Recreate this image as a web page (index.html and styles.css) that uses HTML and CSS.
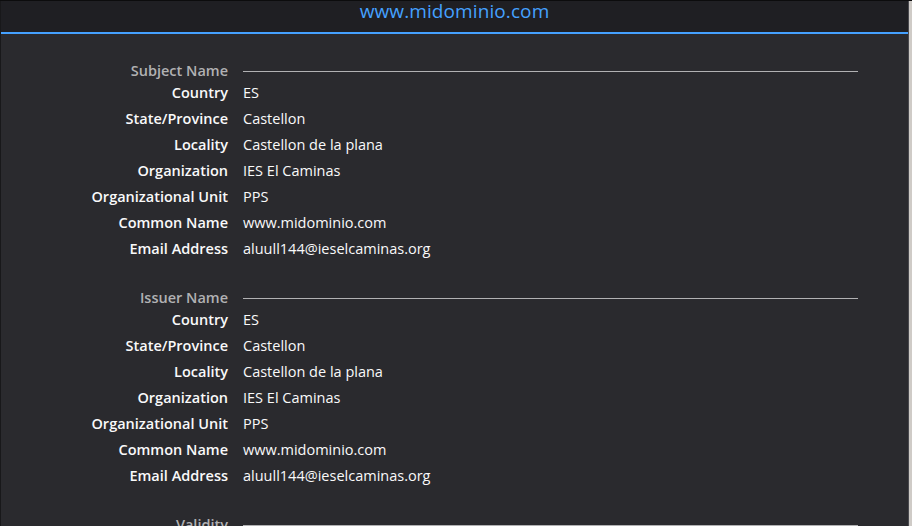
FILE: index.html
```html
<!DOCTYPE html>
<html>
<head>
<meta charset="utf-8">
<link rel="stylesheet" href="styles.css">
</head>
<body>
<div class="page">
  <div class="main">
    <div class="tabbar">
      <div class="tab">www.midominio.com</div>
    </div>
    <div class="content">
      <div class="section">
        <div class="heading"><span class="hlabel">Subject Name</span><span class="hline"></span></div>
        <div class="label">Country</div><div class="value">ES</div>
        <div class="label">State/Province</div><div class="value">Castellon</div>
        <div class="label">Locality</div><div class="value">Castellon de la plana</div>
        <div class="label">Organization</div><div class="value">IES El Caminas</div>
        <div class="label">Organizational Unit</div><div class="value">PPS</div>
        <div class="label">Common Name</div><div class="value">www.midominio.com</div>
        <div class="label">Email Address</div><div class="value">aluull144@ieselcaminas.org</div>
      </div>
      <div class="section">
        <div class="heading"><span class="hlabel">Issuer Name</span><span class="hline"></span></div>
        <div class="label">Country</div><div class="value">ES</div>
        <div class="label">State/Province</div><div class="value">Castellon</div>
        <div class="label">Locality</div><div class="value">Castellon de la plana</div>
        <div class="label">Organization</div><div class="value">IES El Caminas</div>
        <div class="label">Organizational Unit</div><div class="value">PPS</div>
        <div class="label">Common Name</div><div class="value">www.midominio.com</div>
        <div class="label">Email Address</div><div class="value">aluull144@ieselcaminas.org</div>
      </div>
      <div class="section">
        <div class="heading"><span class="hlabel">Validity</span><span class="hline"></span></div>
      </div>
    </div>
  </div>
  <div class="scrollbar"></div>
</div>
</body>
</html>
```
FILE: styles.css
```css
html, body {
  margin: 0;
  padding: 0;
  height: 100%;
  overflow: hidden;
}
body {
  background: #2a2a2e;
  font-family: "Open Sans", "Noto Sans", sans-serif;
  color: #f9f9fa;
}
.page {
  display: flex;
  height: 100%;
  border-top: 1px solid #0c0c0d;
  box-sizing: border-box;
}
.main {
  flex: 1;
  display: flex;
  flex-direction: column;
  border-left: 1px solid #18181a;
  min-height: 0;
}
.scrollbar {
  width: 3px;
  background: #cfcbc7;
  border-left: 1px solid #4a4a4f;
}
.tabbar {
  flex-shrink: 0;
  height: 31px;
  background: #1f1f23;
  border-bottom: 2px solid #45a1ff;
  display: flex;
  justify-content: center;
}
.tab {
  color: #45a1ff;
  font-size: 19px;
  line-height: 20px;
  letter-spacing: 0.1px;
}
.content {
  flex-shrink: 0;
  padding-top: 28px;
  display: flex;
  flex-direction: column;
  gap: 27px;
}
.section {
  display: grid;
  grid-template-columns: 227px 615px;
  column-gap: 15px;
  font-size: 14.5px;
}
.heading {
  grid-column: 1 / 3;
  display: grid;
  grid-template-columns: 227px 615px;
  column-gap: 15px;
  align-items: center;
  height: 18px;
}
.hlabel {
  text-align: right;
  color: #b1b1b3;
  font-weight: 600;
  line-height: 18px;
}
.hline {
  height: 1px;
  background: #b1b1b3;
}
.label {
  text-align: right;
  font-weight: 600;
  line-height: 26px;
  white-space: nowrap;
}
.value {
  line-height: 26px;
  white-space: nowrap;
}
```
